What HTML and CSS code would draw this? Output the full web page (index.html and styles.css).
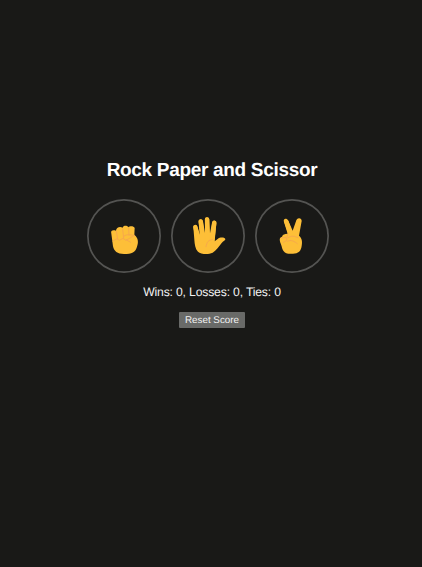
FILE: index.html
```html
<!DOCTYPE html>
<html lang="en">
<head>
<meta charset="utf-8">
<title>Rock Paper and Scissor</title>
<link rel="stylesheet" href="styles.css">
</head>
<body>
<main class="game">
  <h1 class="title">Rock Paper and Scissor</h1>
  <div class="moves">
    <button class="move" aria-label="Rock">
      <svg viewBox="9 15 222 222">
        <path class="skin" d="M82 119C79 109 87 107 96 110C96 99 109 96 116 101C118 94 129 94 133 100C137 95 150 96 152 102L151 123C163 131 164 146 159 158C155 174 143 180 120 180C100 180 90 172 87 157Z"/>
        <path class="crease" d="M97 112L101 135M116 105L119 134M134 103L135 124M87 141L99 134L106 139L117 133L125 139L137 133L150 124M119 127C131 118 143 123 151 125M126 137L140 145"/>
      </svg>
    </button>
    <button class="move" aria-label="Paper">
      <svg viewBox="9 15 222 222">
        <path class="skin" d="M76 99C75 91 86 91 88 98L96 122L92 84C91 74 103 73 105 82L111 117L111 76C111 68 123 68 124 76L126 118L132 86C134 77 146 79 145 88L140 142L149 135C155 130 168 129 172 135C173 139 165 142 161 147C154 157 144 169 134 176C119 183 98 180 90 173C82 165 80 151 79 137Z"/>
        <path class="finger" d="M82 99L91 138M98 82L104 138M117 76L118 138M139 86L133 138"/>
        <path class="crease" d="M114 158C116 145 121 138 134 136"/>
      </svg>
    </button>
    <button class="move" aria-label="Scissor">
      <svg viewBox="9 15 222 222">
        <path class="skin" d="M96 84C92 73 104 70 109 80L122 110L133 79C136 69 150 71 149 81L141 125C151 133 151 144 149 156C147 172 138 180 120 179C103 181 93 174 90 161C88 151 81 141 84 133C86 128 91 130 91 126C94 119 102 120 107 119Z"/>
        <path class="finger" d="M103 83L117 124M141 81L130 124"/>
        <path class="crease" d="M88 132L102 130L105 139L94 145M107 120L105 130M108 132C117 123 129 127 138 131M107 142C117 135 128 143 136 149"/>
      </svg>
    </button>
  </div>
  <p class="score">Wins: 0, Losses: 0, Ties: 0</p>
  <button class="reset">Reset Score</button>
</main>
</body>
</html>
```
FILE: styles.css
```css
* {
  box-sizing: border-box;
}

body {
  margin: 0;
  min-height: 100vh;
  background: #191917;
  color: #fff;
  font-family: "Liberation Sans", Arial, sans-serif;
  text-rendering: geometricPrecision;
}

.game {
  display: flex;
  flex-direction: column;
  align-items: center;
  padding: 160px 0 0 2px;
}

.title {
  margin: 0 0 17px;
  font-size: 19px;
  line-height: 22px;
  letter-spacing: -0.31px;
  white-space: nowrap;
}

.moves {
  display: flex;
  gap: 10px;
  margin-right: 8px;
}

.move {
  width: 74px;
  height: 74px;
  padding: 0;
  border: 0;
  border-radius: 50%;
  background: none;
  box-shadow: inset 0 0 0 1.7px #545452;
}

.move svg {
  display: block;
  width: 74px;
  height: 74px;
}

.skin {
  fill: #fdbf38;
}

.finger {
  fill: none;
  stroke: #fdbf38;
  stroke-width: 13;
  stroke-linecap: round;
}

.crease {
  fill: none;
  stroke: #f7a94c;
  stroke-width: 3;
  stroke-linecap: round;
  stroke-linejoin: round;
}

.score {
  margin: 12px 0 0;
  font-size: 12.2px;
  line-height: 15px;
  letter-spacing: -0.17px;
  color: #f2f2f2;
}

.reset {
  width: 66px;
  height: 16px;
  margin-top: 12px;
  padding: 0;
  border: 0;
  border-radius: 1px;
  background: #696a68;
  color: #f2f2f2;
  font: 9.8px/17px "Liberation Sans", Arial, sans-serif;
  text-rendering: geometricPrecision;
}
```
